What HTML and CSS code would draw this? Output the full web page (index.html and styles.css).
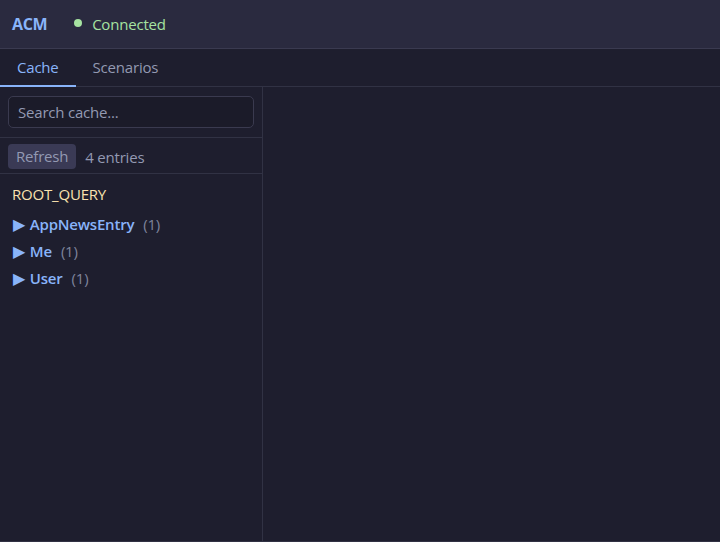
FILE: index.html
```html
<!DOCTYPE html>
<html lang="en">
<head>
    <meta charset="UTF-8">
    <title>ACM</title>
    <link rel="stylesheet" href="styles.css">
</head>
<body>
    <div class="app">
        <div class="header">
            <span class="logo">ACM</span>
            <span class="status"><span class="dot"></span>Connected</span>
        </div>
        <div class="tabs">
            <div class="tab active">Cache</div>
            <div class="tab">Scenarios</div>
        </div>
        <div class="main">
            <div class="sidebar">
                <div class="search-box">
                    <input type="text" class="search" placeholder="Search cache...">
                </div>
                <div class="toolbar">
                    <button class="refresh">Refresh</button>
                    <span class="count">4 entries</span>
                </div>
                <div class="tree">
                    <div class="root">ROOT_QUERY</div>
                    <div class="node"><span class="arrow">▶</span><span class="name">AppNewsEntry</span><span class="num">(1)</span></div>
                    <div class="node"><span class="arrow">▶</span><span class="name">Me</span><span class="num">(1)</span></div>
                    <div class="node"><span class="arrow">▶</span><span class="name">User</span><span class="num">(1)</span></div>
                </div>
            </div>
            <div class="detail"></div>
        </div>
    </div>
</body>
</html>
```

FILE: styles.css
```css
html, body {
    margin: 0;
    padding: 0;
    height: 100%;
    background: #1e1e2e;
    font-family: "Open Sans", "Noto Sans", sans-serif;
    font-size: 15px;
    letter-spacing: -0.2px;
    color: #cdd6f4;
}
.app {
    height: 100%;
    display: flex;
    flex-direction: column;
    box-sizing: border-box;
    border-bottom: 1px solid #313244;
}
.header {
    height: 48px;
    flex: none;
    display: flex;
    align-items: center;
    padding: 0 12px;
    background: #2a2a3f;
    border-bottom: 1px solid #3a3a50;
}
.logo {
    color: #89b4fa;
    font-weight: bold;
    font-size: 16px;
    letter-spacing: -0.4px;
}
.status {
    margin-left: 27px;
    display: flex;
    align-items: center;
    color: #a6e3a1;
}
.dot {
    width: 8px;
    height: 8px;
    border-radius: 50%;
    background: #a6e3a1;
    margin-right: 10px;
    margin-top: -2px;
}
.tabs {
    height: 37px;
    flex: none;
    display: flex;
    border-bottom: 1px solid #313244;
}
.tab {
    padding: 0 17px;
    display: flex;
    align-items: center;
    color: #9399b2;
    border-bottom: 2px solid transparent;
    margin-bottom: -1px;
}
.tab.active {
    color: #89b4fa;
    border-bottom-color: #89b4fa;
}
.main {
    flex: 1;
    display: flex;
    min-height: 0;
}
.sidebar {
    width: 262px;
    flex: none;
    border-right: 1px solid #313244;
}
.search-box {
    padding: 9px 8px 9px 8px;
    border-bottom: 1px solid #313244;
}
.search {
    box-sizing: border-box;
    width: 100%;
    height: 32px;
    background: #1b1b29;
    border: 1px solid #3a3a4f;
    border-radius: 5px;
    padding: 0 9px;
    font: inherit;
    letter-spacing: inherit;
    color: #cdd6f4;
    outline: none;
}
.search::placeholder {
    color: #9399b2;
}
.toolbar {
    display: flex;
    align-items: center;
    padding: 6px 8px 4px 8px;
    border-bottom: 1px solid #313244;
}
.refresh {
    font: inherit;
    letter-spacing: inherit;
    color: #9399b2;
    background: #3a3a55;
    border: none;
    border-radius: 4px;
    padding: 2px 8px 3px 8px;
    margin-right: 9px;
}
.count {
    color: #9399b2;
}
.tree {
    padding: 10px 12px;
}
.root {
    color: #f9e2af;
    margin-bottom: 6px;
}
.node {
    display: flex;
    align-items: center;
    height: 27px;
}
.arrow {
    color: #89b4fa;
    font-size: 16px;
    margin: 0 5px 0 1px;
}
.name {
    color: #89b4fa;
    font-weight: 600;
    margin-right: 9px;
}
.num {
    color: #7f849c;
}
.detail {
    flex: 1;
}
```
